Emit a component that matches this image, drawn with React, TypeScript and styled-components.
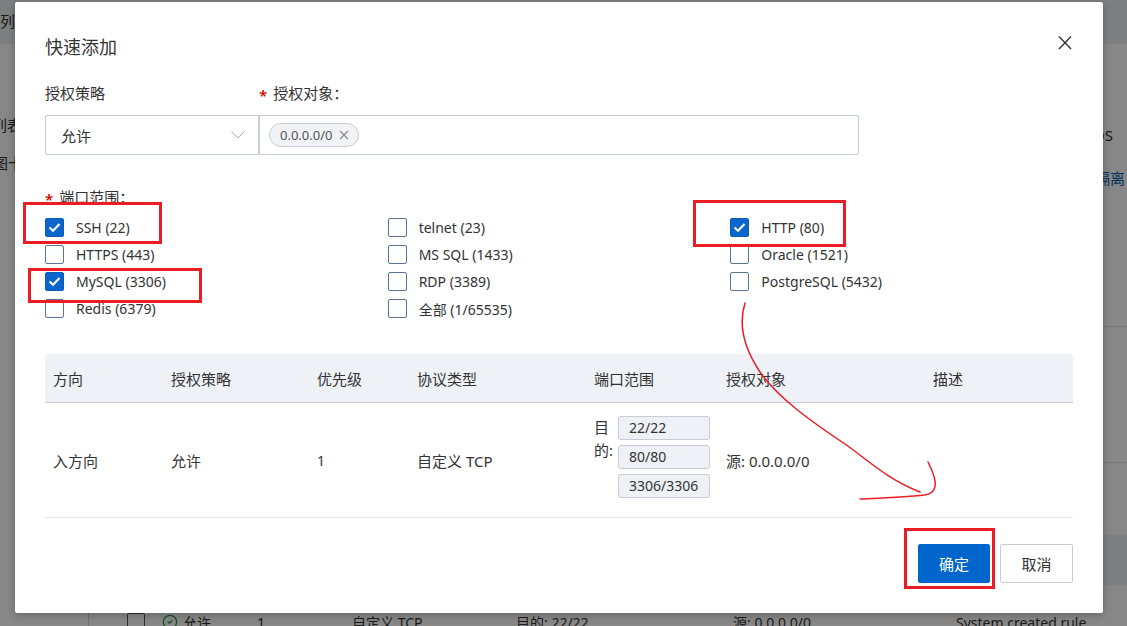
import styled, { createGlobalStyle } from 'styled-components';
import { CircleCheck } from 'lucide-react';

const GlobalStyle = createGlobalStyle`
  html, body { margin: 0; padding: 0; }
  body {
    font-family: 'Noto Sans', 'Noto Sans CJK SC', sans-serif;
    color: #333;
  }
  * { box-sizing: border-box; }
`;

// ---------- page behind the dialog ----------

const Page = styled.div`
  position: relative;
  width: 1127px;
  height: 626px;
  overflow: hidden;
  background: #fff;
  display: flex;
  flex-direction: column;
`;

const TopBar = styled.div`
  flex: none;
  height: 44px;
  padding: 0 0 4px 0;
  background: #eff0f4;
  display: flex;
  align-items: center;
  font-size: 15px;
`;

const Content = styled.div`
  flex: 1;
  display: flex;
`;

const LeftRail = styled.div`
  flex: none;
  width: 88px;
  padding-top: 71px;
  display: flex;
  flex-direction: column;
  gap: 18px;
  font-size: 15px;
  line-height: 20px;
  white-space: nowrap;
`;

const RailItem = styled.div<{ $indent: number }>`
  margin-left: ${({ $indent }) => $indent}px;
`;

const TablePanel = styled.div`
  flex: 1;
  border-left: 1px solid #cfd3da;
  display: flex;
  flex-direction: column;
`;

const Block = styled.div<{ $h: number }>`
  flex: none;
  height: ${({ $h }) => $h}px;
  border-bottom: 1px solid #dcdfe5;
  display: flex;
  flex-direction: column;
  align-items: flex-end;
  padding-top: 81px;
  gap: 23px;
  font-size: 15px;
  line-height: 20px;
  white-space: nowrap;
`;

const SideText = styled.div<{ $right: number; $link?: boolean }>`
  margin-right: ${({ $right }) => $right}px;
  color: ${({ $link }) => ($link ? '#0a5fb4' : '#333')};
`;

const Spacer = styled.div`
  flex: none;
  height: 72px;
`;

const InnerHead = styled.div`
  flex: none;
  height: 50px;
  background: #eef0f4;
`;

const InnerRow = styled.div`
  display: grid;
  grid-template-columns: 35px 95px 95px 164px 217px 223px 1fr;
  align-items: center;
  padding: 27px 0 0 38px;
  font-size: 14px;
  white-space: nowrap;
`;

const SmallBox = styled.span`
  display: block;
  width: 18px;
  height: 18px;
  border: 1px solid #4b5a70;
  border-radius: 2px;
`;

const PolicyCell = styled.span`
  display: flex;
  align-items: center;
  gap: 5px;
  color: #333;
`;

const Mask = styled.div`
  position: absolute;
  inset: 0;
  background: rgba(0, 0, 0, 0.47);
`;

// ---------- dialog ----------

const Dialog = styled.div`
  position: absolute;
  left: 15px;
  top: 2px;
  width: 1088px;
  height: 611px;
  background: #fff;
  border-radius: 2px;
  box-shadow: 0 2px 8px rgba(0, 0, 0, 0.25);
  padding: 33px 30px 30px;
  display: flex;
  flex-direction: column;
`;

const Header = styled.div`
  display: flex;
  justify-content: space-between;
  align-items: flex-start;
`;

const Title = styled.div`
  font-size: 18px;
  line-height: 24px;
  color: #333;
`;

const CloseButton = styled.button`
  border: none;
  background: none;
  padding: 0;
  width: 16px;
  height: 16px;
  display: flex;
  cursor: pointer;
`;

const FieldRow = styled.div`
  display: flex;
  margin-top: 24px;
`;

const Field = styled.div<{ $w: number }>`
  width: ${({ $w }) => $w}px;
  display: flex;
  flex-direction: column;
  gap: 12px;
`;

const Label = styled.div<{ $required?: boolean }>`
  height: 20px;
  font-size: 15px;
  line-height: 20px;
  color: #333;
  display: flex;
  align-items: center;
  gap: 6px;
  &::before {
    content: ${({ $required }) => ($required ? "'*'" : 'none')};
    color: #d40000;
    font-size: 15px;
    line-height: 20px;
    height: 20px;
    padding-top: 3px;
    font-weight: 600;
  }
`;

const SelectBox = styled.div`
  height: 40px;
  border: 1px solid #c8ccd4;
  border-radius: 2px 0 0 2px;
  padding: 0 13px 0 15px;
  display: flex;
  align-items: center;
  justify-content: space-between;
  font-size: 15px;
`;

const TagInput = styled.div`
  height: 40px;
  border: 1px solid #c8ccd4;
  border-radius: 0 2px 2px 0;
  padding: 0 9px;
  display: flex;
  align-items: center;
`;

const Tag = styled.span`
  height: 24px;
  border: 1px solid #c8ccd4;
  border-radius: 12px;
  background: #f0f2f5;
  padding: 0 9px 0 10px;
  display: inline-flex;
  align-items: center;
  gap: 7px;
  font-size: 13px;
  color: #555;
`;

const PortLabel = styled(Label)`
  margin-top: 32px;
`;

const CheckGrid = styled.div`
  display: grid;
  grid-template-columns: repeat(3, 1fr);
  row-gap: 8px;
  margin-top: 11px;
`;

const CheckItem = styled.label`
  display: flex;
  align-items: center;
  gap: 12px;
  height: 19px;
  font-size: 14px;
  color: #333;
  white-space: nowrap;
`;

const Box = styled.span<{ $checked: boolean }>`
  flex: none;
  width: 19px;
  height: 19px;
  border-radius: 2px;
  border: 1px solid ${({ $checked }) => ($checked ? '#0a5cb8' : '#5a7398')};
  background: ${({ $checked }) => ($checked ? '#0a66cc' : '#fff')};
  display: flex;
  align-items: center;
  justify-content: center;
`;

const Table = styled.div`
  margin-top: 36px;
  font-size: 15px;
  color: #333;
`;

const COLUMNS = '118px 146px 100px 177px 132px 207px 1fr';

const HeadRow = styled.div`
  display: grid;
  grid-template-columns: ${COLUMNS};
  align-items: center;
  height: 49px;
  padding-left: 8px;
  background: #eef1f6;
  border-bottom: 1px solid #c3c8d1;
  border-radius: 4px 4px 0 0;
`;

const BodyRow = styled.div`
  display: grid;
  grid-template-columns: ${COLUMNS};
  align-items: center;
  padding: 13px 0 19px 8px;
  border-bottom: 1px solid #e6e6e6;
`;

const Cell = styled.div`
  margin-top: 7px;
  font-size: 14px;
  white-space: nowrap;
`;

const ZhCell = styled(Cell)`
  font-size: 15px;
`;

const PortCell = styled.div`
  display: flex;
  gap: 4px;
`;

const PortPrefix = styled.div`
  width: 20px;
  font-size: 15px;
  line-height: 23px;
`;

const PortList = styled.div`
  display: flex;
  flex-direction: column;
  gap: 5px;
`;

const PortTag = styled.span`
  width: 92px;
  height: 24px;
  border: 1px solid #c8ccd4;
  border-radius: 3px;
  background: #eef1f5;
  padding-left: 10px;
  font-size: 14px;
  line-height: 22px;
`;

const Footer = styled.div`
  margin-top: 26px;
  display: flex;
  justify-content: flex-end;
  gap: 10px;
`;

const Button = styled.button<{ $primary?: boolean }>`
  height: 39px;
  width: ${({ $primary }) => ($primary ? 72 : 73)}px;
  border-radius: 2px;
  border: 1px solid ${({ $primary }) => ($primary ? '#0066cc' : '#c8ccd4')};
  background: ${({ $primary }) => ($primary ? '#0066cc' : '#fff')};
  color: ${({ $primary }) => ($primary ? '#fff' : '#333')};
  font-family: inherit;
  font-size: 15px;
  cursor: pointer;
`;

const Annotations = styled.svg`
  position: absolute;
  left: 0;
  top: 0;
  pointer-events: none;
`;

const ports = [
  { label: 'SSH (22)', checked: true },
  { label: 'telnet (23)', checked: false },
  { label: 'HTTP (80)', checked: true },
  { label: 'HTTPS (443)', checked: false },
  { label: 'MS SQL (1433)', checked: false },
  { label: 'Oracle (1521)', checked: false },
  { label: 'MySQL (3306)', checked: true },
  { label: 'RDP (3389)', checked: false },
  { label: 'PostgreSQL (5432)', checked: false },
  { label: 'Redis (6379)', checked: false },
  { label: '全部 (1/65535)', checked: false },
];

const headers = ['方向', '授权策略', '优先级', '协议类型', '端口范围', '授权对象', '描述'];

function Check() {
  return (
    <svg width='13' height='11' viewBox='0 0 13 11'>
      <path d='M1.5 5.5 L5 8.8 L11.5 2' fill='none' stroke='#fff' strokeWidth='2' />
    </svg>
  );
}

function App() {
  return (
    <Page>
      <GlobalStyle />
      <TopBar>列表</TopBar>
      <Content>
        <LeftRail>
          <RailItem $indent={-38}>规则列表</RailItem>
          <RailItem $indent={-22}>视图卡片</RailItem>
        </LeftRail>
        <TablePanel>
          <Block $h={283}>
            <SideText $right={14}>CentOS</SideText>
            <SideText $right={2} $link>隔离</SideText>
          </Block>
          <Block $h={136} />
          <Spacer />
          <InnerHead />
          <InnerRow>
            <SmallBox />
            <PolicyCell>
              <CircleCheck size={16} color='#2f9e3a' />
              允许
            </PolicyCell>
            <span>1</span>
            <span>自定义 TCP</span>
            <span>目的: 22/22</span>
            <span>源: 0.0.0.0/0</span>
            <span>System created rule</span>
          </InnerRow>
        </TablePanel>
      </Content>

      <Mask />

      <Dialog>
        <Header>
          <Title>快速添加</Title>
          <CloseButton aria-label='close'>
            <svg width='16' height='16' viewBox='0 0 16 16'>
              <path d='M2 1.5 L14 14 M14 1.5 L2 14' stroke='#333' strokeWidth='1.4' />
            </svg>
          </CloseButton>
        </Header>

        <FieldRow>
          <Field $w={214}>
            <Label>授权策略</Label>
            <SelectBox>
              允许
              <svg width='14' height='8' viewBox='0 0 14 8'>
                <path d='M0.5 0.5 L7 7 L13.5 0.5' fill='none' stroke='#a9adb5' strokeWidth='1' />
              </svg>
            </SelectBox>
          </Field>
          <Field $w={600}>
            <Label $required>授权对象：</Label>
            <TagInput>
              <Tag>
                0.0.0.0/0
                <svg width='10' height='10' viewBox='0 0 10 10'>
                  <path d='M1 1 L9 9 M9 1 L1 9' stroke='#888' strokeWidth='1.1' />
                </svg>
              </Tag>
            </TagInput>
          </Field>
        </FieldRow>

        <PortLabel $required>端口范围：</PortLabel>
        <CheckGrid>
          {ports.map((port) => (
            <CheckItem key={port.label}>
              <Box $checked={port.checked}>{port.checked && <Check />}</Box>
              {port.label}
            </CheckItem>
          ))}
        </CheckGrid>

        <Table>
          <HeadRow>
            {headers.map((header) => (
              <div key={header}>{header}</div>
            ))}
          </HeadRow>
          <BodyRow>
            <ZhCell>入方向</ZhCell>
            <ZhCell>允许</ZhCell>
            <Cell>1</Cell>
            <ZhCell>自定义 TCP</ZhCell>
            <PortCell>
              <PortPrefix>目的:</PortPrefix>
              <PortList>
                <PortTag>22/22</PortTag>
                <PortTag>80/80</PortTag>
                <PortTag>3306/3306</PortTag>
              </PortList>
            </PortCell>
            <ZhCell>源: 0.0.0.0/0</ZhCell>
            <Cell />
          </BodyRow>
        </Table>

        <Footer>
          <Button $primary>确定</Button>
          <Button>取消</Button>
        </Footer>
      </Dialog>

      <Annotations width='1127' height='626' viewBox='0 0 1127 626'>
        <g fill='none' stroke='#ec1c24' strokeWidth='3'>
          <rect x='24.5' y='203.5' width='136' height='39' />
          <rect x='29.5' y='269.5' width='171' height='32' />
          <rect x='694.5' y='201.5' width='150' height='44' />
          <rect x='905.5' y='529.5' width='88' height='58' />
        </g>
        <g fill='none' stroke='#ec1c24' strokeWidth='1.5' strokeLinecap='round'>
          <path d='M745 303 C 739 322, 742 345, 760 372 C 778 398, 812 422, 845 444 C 868 460, 888 480, 920 492' />
          <path d='M928 462 C 934 474, 942 492, 925 495 C 905 497, 882 498, 860 499' />
        </g>
      </Annotations>
    </Page>
  );
}

export default App;
